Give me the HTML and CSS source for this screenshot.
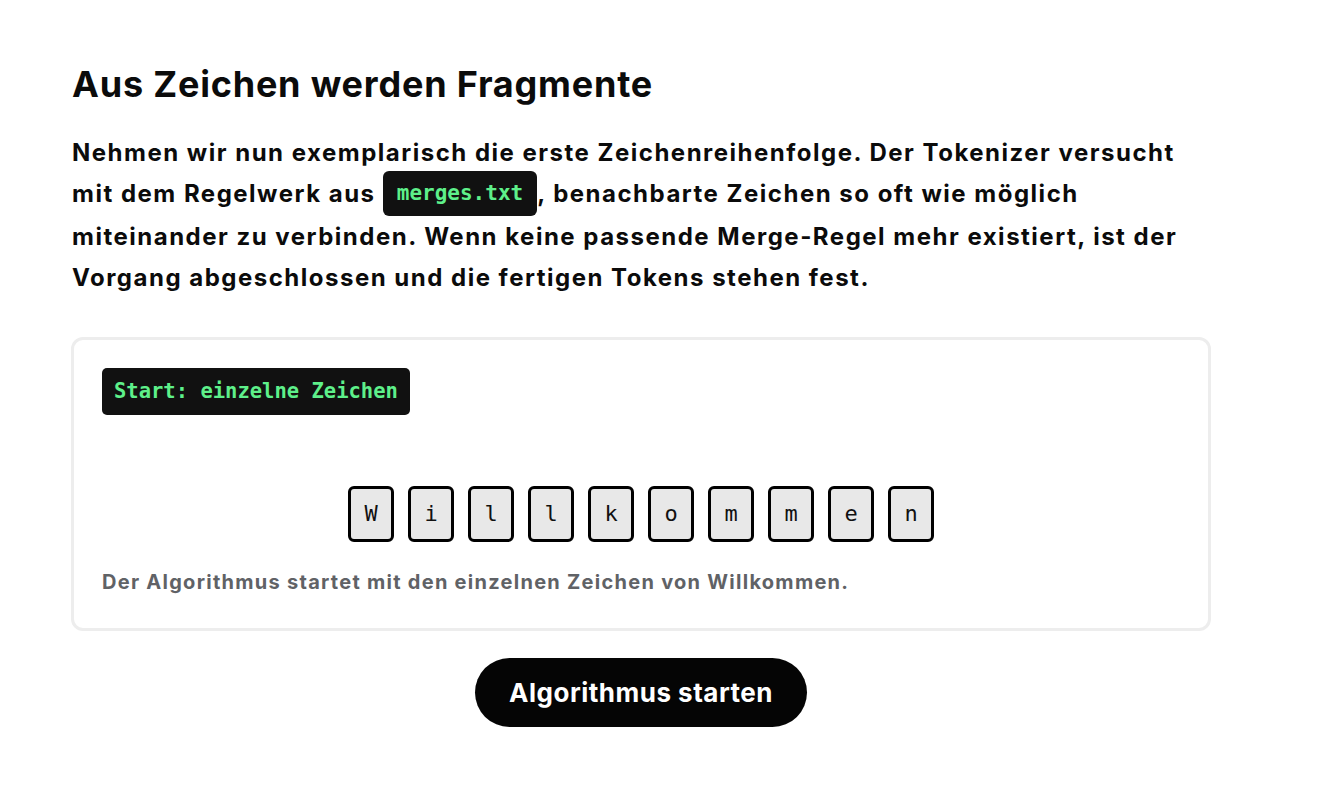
FILE: index.html
```html
<!DOCTYPE html>
<html lang="de">
<head>
<meta charset="utf-8">
<link rel="stylesheet" href="styles.css">
</head>
<body>
<main class="section">
  <h2 class="title">Aus Zeichen werden Fragmente</h2>
  <p class="lead">Nehmen wir nun exemplarisch die erste Zeichenreihenfolge. Der Tokenizer versucht mit dem Regelwerk aus <code class="code">merges.txt</code>, benachbarte Zeichen so oft wie möglich miteinander zu verbinden. Wenn keine passende Merge-Regel mehr existiert, ist der Vorgang abgeschlossen und die fertigen Tokens stehen fest.</p>
  <div class="card">
    <div class="step-label">Start: einzelne Zeichen</div>
    <div class="tokens">
      <span class="tok">W</span><span class="tok">i</span><span class="tok">l</span><span class="tok">l</span><span class="tok">k</span><span class="tok">o</span><span class="tok">m</span><span class="tok">m</span><span class="tok">e</span><span class="tok">n</span>
    </div>
    <p class="caption">Der Algorithmus startet mit den einzelnen Zeichen von Willkommen.</p>
  </div>
  <div class="actions">
    <button class="btn">Algorithmus starten</button>
  </div>
</main>
</body>
</html>
```

FILE: styles.css
```css
* { box-sizing: border-box; }
html, body { margin: 0; padding: 0; background: #fff; }
body {
  font-family: Inter, "Liberation Sans", sans-serif;
  color: #0b0b0b;
}
.section {
  width: 1140px;
  margin-left: 71px;
  padding-top: 60px;
}
.title {
  margin: 0 0 0 1px;
  font-size: 36px;
  font-weight: 700;
  line-height: 48px;
  letter-spacing: 0.8px;
}
.lead {
  margin: 24px 0 0 1px;
  font-size: 24px;
  font-weight: 700;
  line-height: 41px;
  letter-spacing: 1.5px;
}
.code {
  display: inline-block;
  background: #111;
  color: #5ef08a;
  font-family: "DejaVu Sans Mono", "Liberation Mono", monospace;
  font-weight: 700;
  font-size: 21px;
  line-height: 45px;
  letter-spacing: 0;
  padding: 0 14px;
  border-radius: 6px;
  vertical-align: middle;
  margin-top: -4px;
}
.card {
  margin-top: 39px;
  border: 3px solid #ededed;
  border-radius: 12px;
  padding: 28px 28px 32px;
}
.step-label {
  display: inline-block;
  background: #111;
  color: #5ef08a;
  font-family: "DejaVu Sans Mono", "Liberation Mono", monospace;
  font-weight: 700;
  font-size: 20.5px;
  line-height: 47px;
  padding: 0 12px;
  border-radius: 5px;
}
.tokens {
  display: flex;
  justify-content: center;
  gap: 14px;
  margin-top: 71px;
}
.tok {
  width: 46px;
  height: 56px;
  border: 3px solid #000;
  border-radius: 6px;
  background: #e8e8e8;
  display: flex;
  align-items: center;
  justify-content: center;
  font-family: "DejaVu Sans Mono", "Liberation Mono", monospace;
  font-size: 22px;
  color: #111;
}
.caption {
  margin: 26px 0 0;
  font-size: 20px;
  font-weight: 700;
  color: #606266;
  line-height: 28px;
  letter-spacing: 1.27px;
}
.actions {
  display: flex;
  justify-content: center;
  margin-top: 27px;
}
.btn {
  background: #050505;
  color: #fff;
  border: none;
  border-radius: 35px;
  height: 69px;
  padding: 0 34px;
  font-family: Inter, "Liberation Sans", sans-serif;
  font-weight: 700;
  font-size: 26px;
  letter-spacing: 0.5px;
  cursor: pointer;
}
```
